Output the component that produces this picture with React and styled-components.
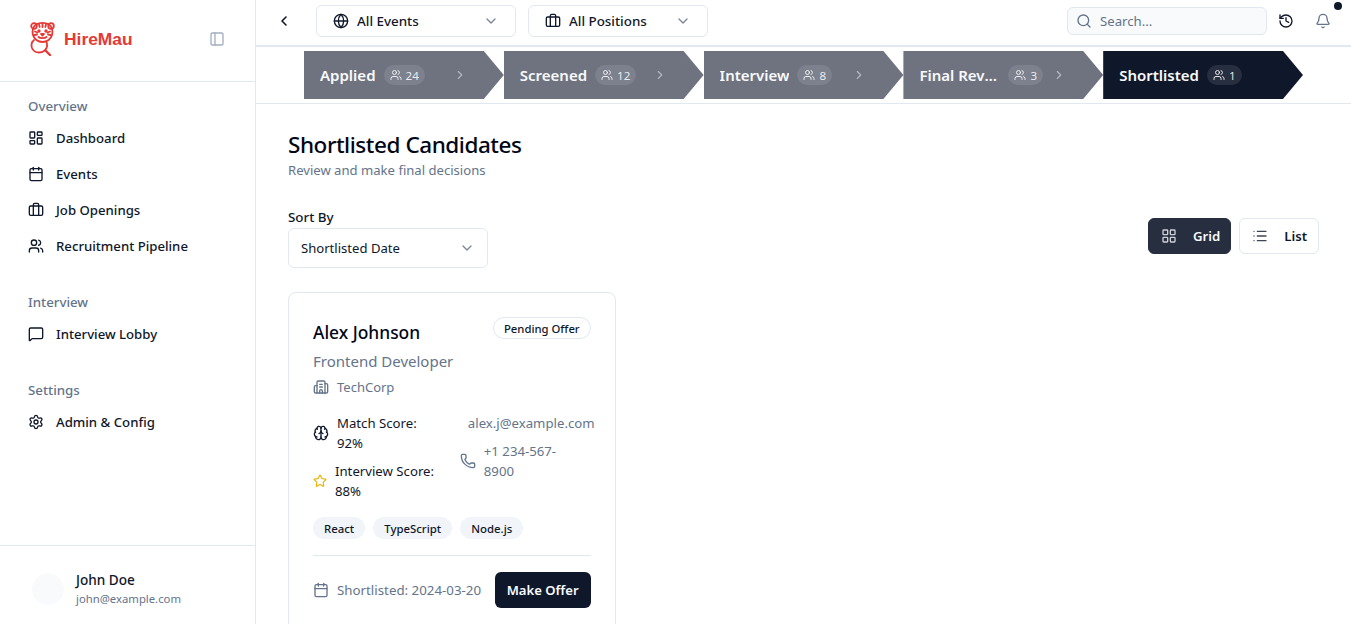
import React from 'react'
import styled, { createGlobalStyle } from 'styled-components'
import {
  Bell, Brain, Briefcase, Building2, Calendar, ChevronDown, ChevronLeft, ChevronRight,
  Globe, History, LayoutDashboard, LayoutGrid, List, MessageSquare, PanelLeft, Phone,
  Search, Settings, Star, Users,
} from 'lucide-react'

const GlobalStyle = createGlobalStyle`
  html, body { margin: 0; height: 100%; overflow: hidden; background: #fff; }
  body { font-family: "Noto Sans", "Open Sans", sans-serif; color: #0f172a; }
  #root { height: 100%; }
  * { box-sizing: border-box; }
`

const TigerLogo = () => (
  <svg width="26" height="34" viewBox="0 0 26 34" fill="none" stroke="#e53935" strokeWidth="1.8" strokeLinecap="round" strokeLinejoin="round">
    <circle cx="4" cy="4" r="2.8" />
    <circle cx="21" cy="4" r="2.8" />
    <path d="M6 2.4C10 0.6 15 0.6 19 2.4C22 5 23 9 22 13C21 17 17 20 12.5 20C8 20 4 17 3 13C2 9 3 5 6 2.4Z" />
    <path d="M12.5 2v3M9 2.5l.7 2.5M16 2.5l-.7 2.5M5 9.5l2.5 1M20 9.5l-2.5 1M4.5 13l2.5-.5M20.5 13l-2.5-.5" />
    <circle cx="9" cy="9" r=".8" fill="#e53935" />
    <circle cx="16" cy="9" r=".8" fill="#e53935" />
    <path d="M11 12h3l-1.5 1.6zM8.5 15c1.5 1.5 6.5 1.5 8 0" />
    <path d="M4 18C1.5 20 1 23 2 26C3.2 29 6 30.5 9 30.5C13 30.5 16.5 28 17 24.5C17.2 23 17 21.5 16.5 20" />
    <path d="M15.5 28.5L20 33" strokeWidth="2.4" />
  </svg>
)

const navGroups = [
  { title: 'Overview', items: [
    { icon: LayoutDashboard, label: 'Dashboard' },
    { icon: Calendar, label: 'Events' },
    { icon: Briefcase, label: 'Job Openings' },
    { icon: Users, label: 'Recruitment Pipeline' },
  ] },
  { title: 'Interview', items: [{ icon: MessageSquare, label: 'Interview Lobby' }] },
  { title: 'Settings', items: [{ icon: Settings, label: 'Admin & Config' }] },
]

const stages = [
  { name: 'Applied', count: 24 },
  { name: 'Screened', count: 12 },
  { name: 'Interview', count: 8 },
  { name: 'Final Review', count: 3 },
  { name: 'Shortlisted', count: 1, active: true },
]

const App = () => {
  return <Page>
    <GlobalStyle />
    <Sidebar>
      <Brand>
        <TigerLogo />
        <BrandName>HireMau</BrandName>
        <CollapseIcon><PanelLeft size={16} /></CollapseIcon>
      </Brand>
      <Nav>
        {navGroups.map(group => <NavGroup key={group.title}>
          <NavTitle>{group.title}</NavTitle>
          {group.items.map(({ icon: Icon, label }) => <NavItem key={label}>
            <Icon size={16} />
            {label}
          </NavItem>)}
        </NavGroup>)}
      </Nav>
      <UserBox>
        <Avatar />
        <div>
          <UserName>John Doe</UserName>
          <UserMail>john@example.com</UserMail>
        </div>
      </UserBox>
    </Sidebar>
    <Main>
      <Header>
        <BackButton><ChevronLeft size={16} strokeWidth={2.4} /></BackButton>
        <HeaderSelect $width="200px">
          <Globe size={16} />
          <span>All Events</span>
          <SelectArrow><ChevronDown size={16} /></SelectArrow>
        </HeaderSelect>
        <HeaderSelect $width="180px">
          <Briefcase size={16} />
          <span>All Positions</span>
          <SelectArrow><ChevronDown size={16} /></SelectArrow>
        </HeaderSelect>
        <SearchBox>
          <Search size={16} />
          Search...
        </SearchBox>
        <HeaderIcon><History size={16} /></HeaderIcon>
        <HeaderIcon $muted>
          <Bell size={16} />
          <NotifyDot />
        </HeaderIcon>
      </Header>
      <StageBar>
        <StageTrack>
          {stages.map(stage => <Stage key={stage.name} $active={stage.active}>
            <StageLeft>
              <StageName>{stage.name}</StageName>
              <StageCount><Users size={12} />{stage.count}</StageCount>
            </StageLeft>
            {!stage.active && <StageArrow><ChevronRight size={14} /></StageArrow>}
          </Stage>)}
        </StageTrack>
      </StageBar>
      <Content>
        <Title>Shortlisted Candidates</Title>
        <Subtitle>Review and make final decisions</Subtitle>
        <Toolbar>
          <div>
            <SortLabel>Sort By</SortLabel>
            <SortSelect>
              Shortlisted Date
              <SelectArrow><ChevronDown size={16} /></SelectArrow>
            </SortSelect>
          </div>
          <ViewSwitch>
            <ViewButton $active><LayoutGrid size={16} />Grid</ViewButton>
            <ViewButton><List size={16} />List</ViewButton>
          </ViewSwitch>
        </Toolbar>
        <CardGrid>
          <Card>
            <CardTop>
              <CardName>Alex Johnson</CardName>
              <Badge>Pending Offer</Badge>
            </CardTop>
            <Role>Frontend Developer</Role>
            <Company><Building2 size={16} />TechCorp</Company>
            <Stats>
              <StatCol>
                <ScoreRow><Brain size={16} /><span>Match Score: 92%</span></ScoreRow>
                <ScoreRow><Star size={14} color="#eab308" /><span>Interview Score: 88%</span></ScoreRow>
              </StatCol>
              <StatCol>
                <ContactRow><MailText>alex.j@example.com</MailText></ContactRow>
                <ContactRow><Phone size={16} /><PhoneText>+1 234-567-8900</PhoneText></ContactRow>
              </StatCol>
            </Stats>
            <Tags>
              <Tag>React</Tag>
              <Tag>TypeScript</Tag>
              <Tag>Node.js</Tag>
            </Tags>
            <CardFooter>
              <FooterDate><Calendar size={16} />Shortlisted: 2024-03-20</FooterDate>
              <OfferButton>Make Offer</OfferButton>
            </CardFooter>
          </Card>
        </CardGrid>
      </Content>
    </Main>
  </Page>
}

const Page = styled.div`
  display: flex;
  height: 100vh;
  overflow: hidden;
`

const Sidebar = styled.aside`
  width: 256px;
  flex: none;
  display: flex;
  flex-direction: column;
  border-right: 1px solid #e2e8f0;
`

const Brand = styled.div`
  height: 82px;
  display: flex;
  align-items: center;
  padding: 0 30px 3px 30px;
  border-bottom: 1px solid #e2e8f0;
`

const BrandName = styled.span`
  font-family: "Liberation Sans", Arial, sans-serif;
  font-size: 17.4px;
  font-weight: 700;
  color: #e53935;
  margin-left: 8px;
`

const CollapseIcon = styled.span`
  margin-left: auto;
  display: flex;
  color: #a3afbf;
`

const Nav = styled.nav`
  flex: 1;
  padding: 14px 0 0 28px;
`

const NavGroup = styled.div`
  margin-bottom: 28px;
`

const NavTitle = styled.div`
  font-size: 13.3px;
  font-weight: 500;
  line-height: 20px;
  color: #64748b;
  margin-bottom: 4px;
`

const NavItem = styled.div`
  height: 36px;
  display: flex;
  align-items: center;
  gap: 12px;
  font-size: 13.2px;
  font-weight: 500;
  color: #0f172a;
`

const UserBox = styled.div`
  height: 79px;
  border-top: 1px solid #e2e8f0;
  display: flex;
  align-items: center;
  gap: 12px;
  padding: 7px 32px 0;
`

const Avatar = styled.div`
  width: 32px;
  height: 32px;
  border-radius: 50%;
  background: #f8fafc;
`

const UserName = styled.div`
  font-size: 13.6px;
  font-weight: 500;
  line-height: 20px;
`

const UserMail = styled.div`
  font-size: 11.3px;
  line-height: 18px;
  color: #64748b;
`

const Main = styled.main`
  flex: 1;
  min-width: 0;
  display: flex;
  flex-direction: column;
`

const Header = styled.header`
  height: 47px;
  flex: none;
  display: flex;
  align-items: center;
  padding: 0 20px 3px 20px;
  border-bottom: 2px solid #e2e8f0;
`

const BackButton = styled.span`
  display: flex;
  margin-right: 24px;
`

const HeaderSelect = styled.div`
  width: ${props => props.$width};
  height: 32px;
  margin-right: 12px;
  display: flex;
  align-items: center;
  gap: 8px;
  padding: 0 16px;
  border: 1px solid #e2e8f0;
  border-radius: 6px;
  font-size: 13.4px;
  font-weight: 500;
`

const SelectArrow = styled.span`
  margin-left: auto;
  display: flex;
  color: #7c8797;
`

const SearchBox = styled.div`
  width: 200px;
  height: 28px;
  margin-left: auto;
  display: flex;
  align-items: center;
  gap: 8px;
  padding: 0 8px;
  border: 1px solid #e2e8f0;
  border-radius: 6px;
  background: #f8fafc;
  font-size: 13.2px;
  color: #64748b;
`

const HeaderIcon = styled.span`
  position: relative;
  display: flex;
  margin-left: ${props => props.$muted ? '21px' : '11px'};
  color: ${props => props.$muted ? '#64748b' : '#0f172a'};
`

const NotifyDot = styled.span`
  position: absolute;
  top: -11px;
  right: -11px;
  width: 8px;
  height: 8px;
  border-radius: 50%;
  background: #0f172a;
`

const StageBar = styled.div`
  height: 57px;
  flex: none;
  display: flex;
  align-items: center;
  justify-content: center;
  border-bottom: 1px solid #e2e8f0;
`

const StageTrack = styled.div`
  width: 999px;
  display: flex;
`

const Stage = styled.div`
  flex: 1 1 0;
  min-width: 0;
  height: 48px;
  display: flex;
  align-items: center;
  gap: 8px;
  padding: 0 37px 0 16px;
  clip-path: polygon(0 0, calc(100% - 20px) 0, 100% 50%, calc(100% - 20px) 100%, 0 100%);
  background: ${props => props.$active ? '#0f172a' : '#6f7380'};
  color: #f8fafc;
`

const StageLeft = styled.div`
  flex: 1;
  min-width: 0;
  display: flex;
  align-items: center;
  gap: 8px;
`

const StageName = styled.span`
  min-width: 0;
  max-width: 81px;
  overflow: hidden;
  white-space: nowrap;
  text-overflow: ellipsis;
  font-size: 15px;
  font-weight: 600;
`

const StageCount = styled.span`
  flex: none;
  height: 20px;
  display: flex;
  align-items: center;
  gap: 4px;
  padding: 0 6px;
  border-radius: 10px;
  background: rgba(255, 255, 255, 0.1);
  font-size: 11.6px;
  color: rgba(248, 250, 252, 0.9);
`

const StageArrow = styled.span`
  flex: none;
  display: flex;
  opacity: 0.5;
`

const Content = styled.div`
  flex: 1;
  min-height: 0;
  padding: 26px 32px;
  overflow: hidden;
`

const Title = styled.h1`
  margin: 0;
  font-size: 22.5px;
  font-weight: 500;
  line-height: 30px;
  letter-spacing: -0.45px;
  color: #020617;
`

const Subtitle = styled.p`
  margin: 0;
  font-size: 13.1px;
  line-height: 20px;
  color: #64748b;
`

const Toolbar = styled.div`
  margin-top: 27px;
  display: flex;
  align-items: center;
  justify-content: space-between;
`

const SortLabel = styled.div`
  font-size: 13.4px;
  font-weight: 500;
  line-height: 20px;
  margin-bottom: 1px;
`

const SortSelect = styled.div`
  width: 200px;
  height: 40px;
  display: flex;
  align-items: center;
  padding: 0 12px;
  border: 1px solid #e2e8f0;
  border-radius: 6px;
  font-size: 13.1px;
`

const ViewSwitch = styled.div`
  display: flex;
  gap: 8px;
  margin-top: -3px;
`

const ViewButton = styled.div`
  height: 36px;
  display: flex;
  align-items: center;
  gap: 16px;
  padding: 0 ${props => props.$active ? '10px' : '11px'} 0 12px;
  border: 1px solid ${props => props.$active ? '#262e40' : '#e2e8f0'};
  border-radius: 6px;
  background: ${props => props.$active ? '#262e40' : '#fff'};
  color: ${props => props.$active ? '#f8fafc' : '#0f172a'};
  font-size: 13.2px;
  font-weight: 600;

  svg {
    opacity: 0.8;
  }
`

const CardGrid = styled.div`
  margin-top: 24px;
  display: grid;
  grid-template-columns: repeat(3, 1fr);
  gap: 24px;
`

const Card = styled.div`
  padding: 24px;
  border: 1px solid #e2e8f0;
  border-radius: 8px;
`

const CardTop = styled.div`
  display: flex;
  align-items: flex-start;
  justify-content: space-between;
`

const CardName = styled.div`
  margin-top: 1px;
  font-size: 17.4px;
  font-weight: 500;
  line-height: 28px;
  color: #020617;
`

const Badge = styled.span`
  height: 22px;
  padding: 0 10px;
  display: flex;
  align-items: center;
  border: 1px solid #e2e8f0;
  border-radius: 11px;
  font-size: 11.3px;
  font-weight: 500;
`

const Role = styled.div`
  margin-top: 3px;
  font-size: 15px;
  line-height: 24px;
  color: #64748b;
`

const Company = styled.div`
  margin-top: 4px;
  display: flex;
  align-items: center;
  gap: 8px;
  font-size: 13px;
  line-height: 20px;
  color: #64748b;
`

const Stats = styled.div`
  margin-top: 16px;
  display: grid;
  grid-template-columns: minmax(0, 1fr) minmax(0, 1fr);
  column-gap: 16px;
`

const StatCol = styled.div`
  display: flex;
  flex-direction: column;
  gap: 8px;
  font-size: 13.2px;
  line-height: 20px;
`

const ScoreRow = styled.div`
  display: flex;
  align-items: center;
  gap: 8px;
  color: #0f172a;

  svg {
    flex: none;
  }
`

const ContactRow = styled.div`
  display: flex;
  align-items: center;
  gap: 8px;
  color: #64748b;

  svg {
    flex: none;
  }
`

const MailText = styled.span`
  margin-left: 8px;
  white-space: nowrap;
`

const PhoneText = styled.span`
  max-width: 92px;
`

const Tags = styled.div`
  margin-top: 16px;
  display: flex;
  gap: 8px;
`

const Tag = styled.span`
  height: 22px;
  display: flex;
  align-items: center;
  padding: 0 11px;
  border-radius: 11px;
  background: #f1f5f9;
  font-size: 11.4px;
  font-weight: 500;
`

const CardFooter = styled.div`
  margin-top: 16px;
  padding-top: 16px;
  border-top: 1px solid #e2e8f0;
  display: flex;
  align-items: center;
  justify-content: space-between;
`

const FooterDate = styled.div`
  display: flex;
  align-items: center;
  gap: 8px;
  font-size: 13.3px;
  color: #64748b;
`

const OfferButton = styled.button`
  width: 96px;
  height: 36px;
  padding: 0;
  border: 0;
  border-radius: 6px;
  background: #0f172a;
  color: #f8fafc;
  font-family: inherit;
  font-size: 13.1px;
  font-weight: 600;
`

export default App
